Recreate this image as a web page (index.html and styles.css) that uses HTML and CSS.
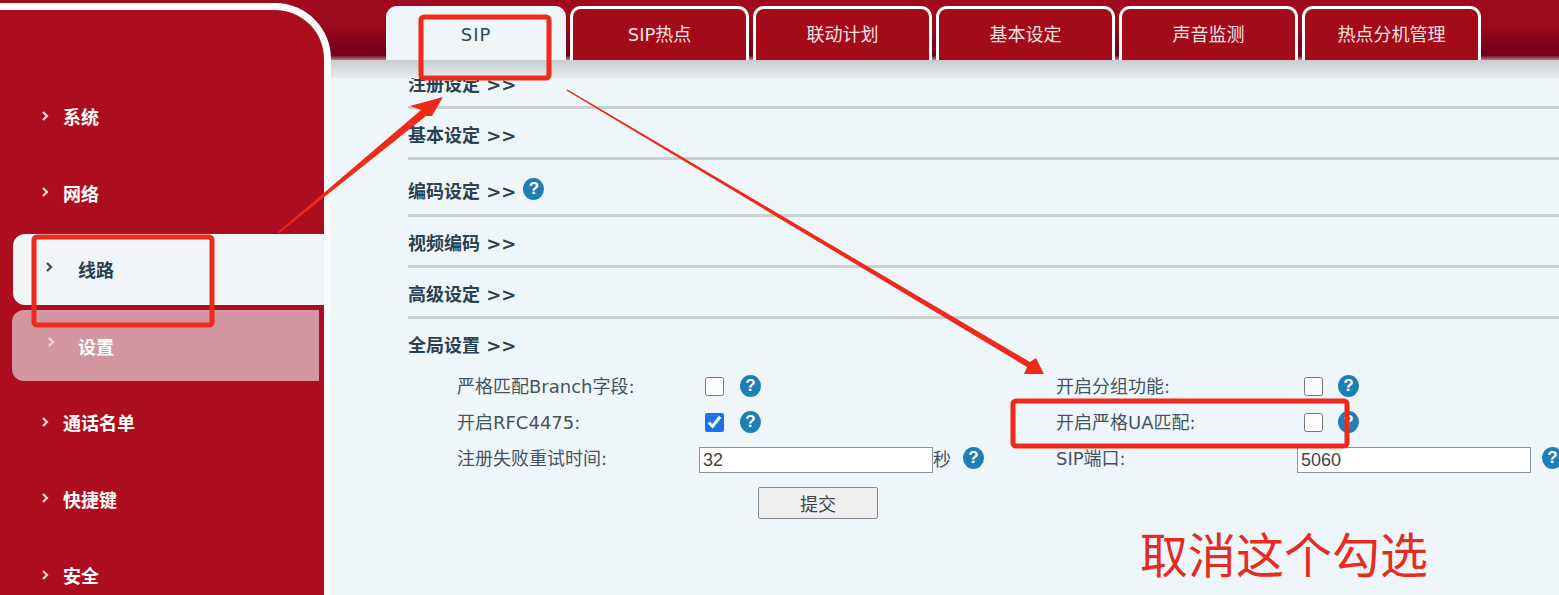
FILE: index.html
```html
<!DOCTYPE html>
<html lang="zh-CN">
<head>
<meta charset="utf-8">
<title>线路设置</title>
<link rel="stylesheet" href="styles.css">
</head>
<body>
<div class="page">
  <aside class="sidebar">
    <nav class="menu">
      <a class="item"><svg class="chev" viewBox="0 0 7 10"><path d="M1 1l4 4-4 4" /></svg><span>系统</span></a>
      <a class="item"><svg class="chev" viewBox="0 0 7 10"><path d="M1 1l4 4-4 4" /></svg><span>网络</span></a>
      <a class="item item-active"><svg class="chev" viewBox="0 0 7 10"><path d="M1 1l4 4-4 4" /></svg><span>线路</span></a>
      <a class="item item-sub"><svg class="chev" viewBox="0 0 7 10"><path d="M1 1l4 4-4 4" /></svg><span>设置</span></a>
      <a class="item"><svg class="chev" viewBox="0 0 7 10"><path d="M1 1l4 4-4 4" /></svg><span>通话名单</span></a>
      <a class="item"><svg class="chev" viewBox="0 0 7 10"><path d="M1 1l4 4-4 4" /></svg><span>快捷键</span></a>
      <a class="item"><svg class="chev" viewBox="0 0 7 10"><path d="M1 1l4 4-4 4" /></svg><span>安全</span></a>
    </nav>
  </aside>
  <main class="main">
    <div class="tabs">
      <a class="tab tab-active">SIP</a>
      <a class="tab">SIP热点</a>
      <a class="tab">联动计划</a>
      <a class="tab">基本设定</a>
      <a class="tab">声音监测</a>
      <a class="tab">热点分机管理</a>
    </div>
    <div class="band"></div>
    <div class="content">
      <section class="section section-first"><h3 class="head">注册设定 <b class="more">&gt;&gt;</b></h3></section>
      <section class="section"><h3 class="head">基本设定 <b class="more">&gt;&gt;</b></h3></section>
      <section class="section section-tall"><h3 class="head">编码设定 <b class="more">&gt;&gt;</b><span class="help help-head">?</span></h3></section>
      <section class="section"><h3 class="head">视频编码 <b class="more">&gt;&gt;</b></h3></section>
      <section class="section"><h3 class="head">高级设定 <b class="more">&gt;&gt;</b></h3></section>
      <section class="section section-open">
        <h3 class="head">全局设置 <b class="more">&gt;&gt;</b></h3>
        <div class="form">
          <div class="field"><label class="label">严格匹配Branch字段:</label><input class="check" type="checkbox"><span class="help">?</span></div>
          <div class="field"><label class="label">开启分组功能:</label><input class="check" type="checkbox"><span class="help">?</span></div>
          <div class="field"><label class="label">开启RFC4475:</label><input class="check" type="checkbox" checked><span class="help">?</span></div>
          <div class="field"><label class="label">开启严格UA匹配:</label><input class="check" type="checkbox"><span class="help">?</span></div>
          <div class="field"><label class="label">注册失败重试时间:</label><input class="text" type="text" value="32"><span class="unit">秒</span><span class="help help-unit">?</span></div>
          <div class="field"><label class="label">SIP端口:</label><input class="text" type="text" value="5060"><span class="help help-port">?</span></div>
        </div>
        <div class="actions"><button class="submit" type="button">提交</button></div>
      </section>
    </div>
  </main>
  <svg class="marks" viewBox="0 0 1559 595" aria-hidden="true">
    <rect class="mark-box" x="421" y="17" width="128" height="61" rx="3"/>
    <rect class="mark-box" x="34" y="237" width="178" height="88" rx="3"/>
    <rect class="mark-box" x="1013" y="401" width="334" height="45" rx="3"/>
    <polygon class="mark-arrow" points="277.5,232.5 421,110 410,106 443,97 432,116 426,116 278.5,233.5"/>
    <polygon class="mark-arrow" points="567.5,89.5 1030,362 1036,358 1044,374 1024,374 1027,367 566.5,90.5"/>
  </svg>
  <div class="note">取消这个勾选</div>
</div>
</body>
</html>
```

FILE: styles.css
```css
* { box-sizing: border-box; }
html, body { margin: 0; height: 100%; overflow: hidden; }
body { font-family: "DejaVu Sans", "Noto Sans CJK SC", sans-serif; font-size: 18px; color: #44545e; }

.page {
  position: relative;
  display: flex;
  width: 1559px;
  height: 595px;
  overflow: hidden;
  background: linear-gradient(#a00a1e 0, #9c081b 45%, #6c0018 92%, #b9808c 100%) 0 0 / 100% 60px no-repeat, #eff6f9;
}

/* sidebar */
.sidebar {
  flex: 0 0 331px;
  margin-top: 3px;
  background: #ad0e1f;
  border-top: 7px solid #fff;
  border-right: 7px solid #fbfdfd;
  border-top-right-radius: 56px;
  overflow: hidden;
}
.menu { display: flex; flex-direction: column; gap: 5.5px; padding-top: 70.5px; }
.item {
  display: flex;
  align-items: center;
  height: 71px;
  flex: none;
  padding-left: 42px;
  color: #fff;
  font-weight: 700;
  font-size: 18px;
}
.chev { width: 7px; height: 10px; margin-right: 14px; margin-top: -1px; flex: none; }
.chev path { fill: none; stroke: #f6d5d9; stroke-width: 2.2; }
.item-active {
  margin-left: 13px;
  padding-left: 33px;
  background: #f0f5f9;
  color: #26404f;
  border-radius: 12px 0 0 12px;
}
.item-active .chev { margin-right: 25px; margin-top: -5px; }
.item-active .chev path { stroke: #40484e; }
.item-sub {
  margin-left: 12px;
  margin-right: 5px;
  padding-left: 36px;
  background: #d3959f;
  border-radius: 12px 0 0 12px;
}
.item-sub .chev { margin-right: 23px; margin-top: -7px; }

/* main */
.main { flex: 1; min-width: 0; display: flex; flex-direction: column; }
.tabs { display: flex; gap: 4px; height: 60px; padding: 6px 0 0 55px; flex: none; }
.tab {
  width: 179px;
  height: 54px;
  background: #a30a1a;
  border: 3px solid #fff;
  border-bottom: 0;
  border-radius: 11px 11px 0 0;
  color: #f6e2e3;
  text-align: center;
  line-height: 52px;
  font-size: 18px;
}
.tab-active { width: 180px; background: #eff5f8; border-color: #eff5f8; color: #2f4a58; letter-spacing: 1px; }
.band { height: 18px; flex: none; background: linear-gradient(#c9cccd, #e6ebec); }

.content { flex: 1; min-height: 0; overflow: hidden; padding-left: 77px; }
.section { border-bottom: 3px solid #c9cecf; }
.section-first { margin-top: -20px; }
.section-tall { padding: 5px 0 1px; }
.section-open { border-bottom: 0; }
.head {
  display: flex;
  align-items: center;
  margin: 0;
  padding-top: 6px;
  height: 48px;
  line-height: 42px;
  font-size: 18px;
  font-weight: 700;
  color: #2a4250;
  white-space: pre;
}
.more { font-weight: 700; font-size: 18px; letter-spacing: 0; }

.help {
  display: block;
  flex: none;
  width: 21px;
  height: 22px;
  border-radius: 50%;
  background: #1e7fb5;
  color: #fff;
  text-align: center;
  font: 700 17px/22px "Liberation Sans", sans-serif;
  margin-left: 16px;
}
.field:nth-child(even) .help { margin-left: 15px; }
.help-head { margin: -6px 0 0 7px; }
.help-unit { margin-left: 13px; }
.field:nth-child(even) .help-port { margin-left: 11px; }

.form {
  display: grid;
  grid-template-columns: 599px 1fr;
  grid-auto-rows: 36px;
  padding: 1px 0 0 49px;
}
.field { display: flex; align-items: center; white-space: nowrap; }
.field:nth-child(even) .label { width: 241px; }
.field:nth-child(even) .check { margin-left: 7px; }
.label { width: 242px; flex: none; padding-bottom: 2px; }
.check { width: 19px; height: 19px; margin: 0 0 0 6px; flex: none; accent-color: #1a73e8; }
.text {
  width: 234px;
  height: 26px;
  margin-top: 4px;
  padding: 0 3px;
  border: 1px solid #8d9499;
  background: #fff;
  color: #444;
  font: 18px "Liberation Sans", sans-serif;
  flex: none;
}
.unit { width: 17px; flex: none; }

.actions { padding: 11px 0 0 350px; }
.submit {
  display: block;
  width: 120px;
  height: 32px;
  padding: 0;
  background: #efefef;
  border: 1px solid #85898c;
  border-radius: 2px;
  color: #444;
  font: 18px "Noto Sans CJK SC", sans-serif;
}

/* annotations drawn over the screenshot */
.marks { position: absolute; left: 0; top: 0; width: 1559px; height: 595px; pointer-events: none; }
.mark-box { fill: none; stroke: #ee2a1d; stroke-width: 5; }
.mark-arrow { fill: #ee2a1d; }
.note {
  position: absolute;
  left: 1140px;
  top: 521px;
  font-size: 48px;
  line-height: 70px;
  color: #e52c22;
  white-space: nowrap;
}
```
